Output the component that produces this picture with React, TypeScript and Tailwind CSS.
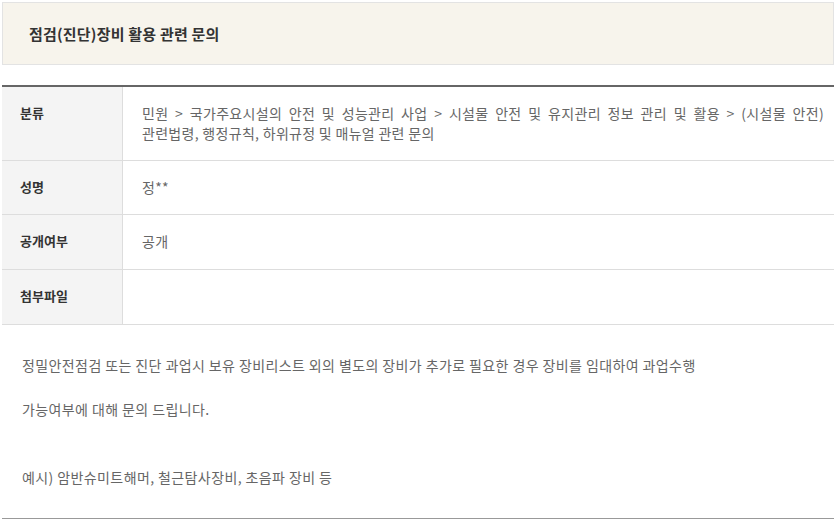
const FONT = "font-['Noto_Sans_CJK_KR','Noto_Sans',sans-serif]";

const rows = [
  {
    label: "분류",
    value:
      "민원 > 국가주요시설의 안전 및 성능관리 사업 > 시설물 안전 및 유지관리 정보 관리 및 활용 > (시설물 안전) 관련법령, 행정규칙, 하위규정 및 매뉴얼 관련 문의",
    pad: "pb-[17px]",
  },
  { label: "성명", value: "정**", pad: "pb-[17px]" },
  { label: "공개여부", value: "공개", pad: "pb-[18px]" },
  { label: "첨부파일", value: "", pad: "pb-[18px]" },
];

export default function App() {
  return (
    <div className={`${FONT} w-[834px] h-[525px] overflow-hidden bg-white pt-[2px] pl-[2px]`}>
      {/* title box */}
      <div className="flex h-[63px] w-[832px] items-center border border-[#e3e3e3] bg-[#f7f4ec] pl-[26px]">
        <h1 className="text-[15px] font-semibold leading-5 tracking-[0.2px] text-[#333]">점검(진단)장비 활용 관련 문의</h1>
      </div>

      {/* info table */}
      <div className="mt-[20px] w-[832px] border-t-2 border-[#666]">
        {rows.map((r) => (
          <div key={r.label} className="grid grid-cols-[121px_1fr] border-b border-[#dddddd] leading-5">
            <div className={`border-r border-[#dddddd] bg-[#f4f4f4] pl-[18px] pt-4 ${r.pad} text-[13px] font-bold text-[#333]`}>
              {r.label}
            </div>
            <div className={`pl-[19px] pr-[10px] pt-4 ${r.pad} text-justify break-keep text-[14px] tracking-[0.3px] text-[#666]`}>
              {r.value}
            </div>
          </div>
        ))}
      </div>

      {/* body */}
      <div className="w-[832px] border-b border-[#999] pl-5 pt-[28px] pb-[29px] text-[14px] leading-6 tracking-[0.4px] text-[#666]">
        <p>정밀안전점검 또는 진단 과업시 보유 장비리스트 외의 별도의 장비가 추가로 필요한 경우 장비를 임대하여 과업수행</p>
        <p className="mt-5">가능여부에 대해 문의 드립니다.</p>
        <p className="mt-[44px]">예시) 암반슈미트해머, 철근탐사장비, 초음파 장비 등</p>
      </div>
    </div>
  );
}
